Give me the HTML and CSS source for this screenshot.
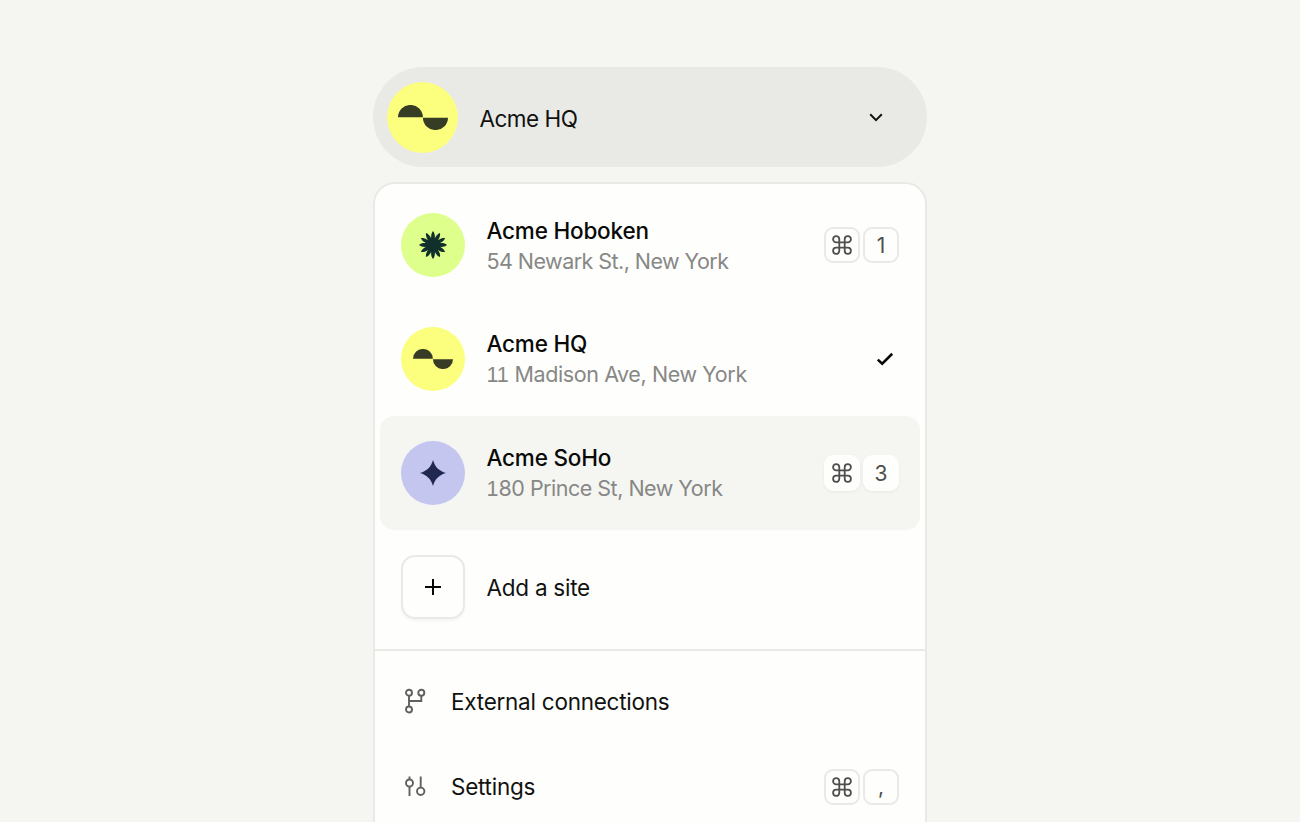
FILE: index.html
```html
<!DOCTYPE html>
<html lang="en">
<head>
<meta charset="utf-8">
<title>Site switcher</title>
<link rel="stylesheet" href="styles.css">
</head>
<body>
<svg class="defs" aria-hidden="true">
  <symbol id="wave" viewBox="0 0 50 25"><path d="M0 12.300a12.400 12.300 0 0 1 24.900 0zM24.900 12.700H50a12.500 12.300 0 0 1-25.100 0z"/></symbol>
  <symbol id="command" viewBox="0 0 20 20"><path d="M7.300 7.300V4.200a3.100 3.100 0 1 0-3.100 3.100h11.600a3.100 3.100 0 1 0-3.100-3.100v11.600a3.100 3.100 0 1 0 3.100-3.100H4.200a3.100 3.100 0 1 0 3.100 3.100z" fill="none" stroke="currentColor" stroke-width="1.800"/></symbol>
</svg>
<main class="switcher">
  <button class="trigger">
    <span class="avatar avatar-large yellow"><svg class="wave-large"><use href="#wave"/></svg></span>
    <span class="trigger-name">Acme HQ</span>
    <svg class="chevron" viewBox="0 0 14 9"><path d="M1.200 1.300 7 7.100l5.800-5.800"/></svg>
  </button>
  <div class="menu">
    <div class="sites">
      <div class="site">
        <span class="avatar green"><svg class="flower" viewBox="-14 -14 28 28"><g id="petals"><path id="petal" d="M0 0C-2.600-7-2.400-11 0-14 2.400-11 2.600-7 0 0z"/><use href="#petal" transform="rotate(30)"/><use href="#petal" transform="rotate(60)"/></g><use href="#petals" transform="rotate(90)"/><use href="#petals" transform="rotate(180)"/><use href="#petals" transform="rotate(270)"/><circle r="7.500"/></svg></span>
        <div class="details"><div class="name">Acme Hoboken</div><div class="address newark">54 Newark St., New York</div></div>
        <div class="keys"><kbd><svg class="cmd"><use href="#command"/></svg></kbd><kbd>1</kbd></div>
      </div>
      <div class="site">
        <span class="avatar yellow"><svg class="wave-small"><use href="#wave"/></svg></span>
        <div class="details"><div class="name">Acme HQ</div><div class="address madison"><span class="footed">11</span> Madison Ave, New York</div></div>
        <svg class="check" viewBox="0 0 18 14"><path d="M1.800 7.600 6.200 11.600 16.200 1.800"/></svg>
      </div>
      <div class="site active">
        <span class="avatar blue"><svg class="spark" viewBox="-13 -13 26 26"><path d="M0-13C2-6 6-2 13 0 6 2 2 6 0 13-2 6-6 2-13 0-6-2-2-6 0-13z"/></svg></span>
        <div class="details"><div class="name">Acme SoHo</div><div class="address prince"><span class="footed">1</span>80 Prince St, New York</div></div>
        <div class="keys"><kbd><svg class="cmd"><use href="#command"/></svg></kbd><kbd>3</kbd></div>
      </div>
      <div class="site">
        <span class="add"><svg class="plus" viewBox="0 0 16 16"><path d="M8 0v16M0 8h16"/></svg></span>
        <div class="details label">Add a site</div>
      </div>
    </div>
    <div class="actions">
      <div class="action">
        <svg class="icon" viewBox="0 0 22 26"><circle cx="5" cy="3.700" r="3"/><circle cx="17.300" cy="3.700" r="3"/><circle cx="5" cy="20.500" r="3"/><path d="M5 6.700v10.800M17.300 6.700V12H5"/></svg>
        <span class="label">External connections</span>
      </div>
      <div class="action">
        <svg class="icon" viewBox="0 0 22 26"><circle cx="5.500" cy="9" r="3.500"/><circle cx="16.700" cy="17.300" r="3.700"/><path d="M5.500 2.500v3M5.500 12.500v9.500M16.700 2.500v11.100"/></svg>
        <span class="label">Settings</span>
        <div class="keys"><kbd><svg class="cmd"><use href="#command"/></svg></kbd><kbd>,</kbd></div>
      </div>
    </div>
  </div>
</main>
</body>
</html>
```
FILE: styles.css
```css
* { box-sizing: border-box; }
body {
  margin: 0;
  height: 822px;
  overflow: hidden;
  background: #f5f6f2;
  color: #111210;
  font-family: Inter, "Liberation Sans", sans-serif;
  font-size: 22.500px;
}
.defs { display: none; }
.switcher { width: 554px; margin: 0 auto; padding-top: 67px; }
.trigger {
  display: flex;
  align-items: center;
  width: 100%;
  height: 100px;
  padding: 0 44px 0 14px;
  border: 0;
  border-radius: 50px;
  background: #e9eae6;
  color: inherit;
  font: inherit;
  text-align: left;
}
.trigger-name { flex: 1; margin-left: 21.400px; padding-top: 2px; letter-spacing: -0.5px; }
.chevron { width: 14px; height: 9px; fill: none; stroke: #111210; stroke-width: 2; }
.avatar {
  display: flex;
  flex: none;
  align-items: center;
  justify-content: center;
  width: 64px;
  height: 64px;
  border-radius: 50%;
}
.avatar-large { width: 71px; height: 71px; }
.yellow { background: #fcff7e; fill: #373d25; }
.green { background: #dfff8c; fill: #12302b; }
.blue { background: #c5c6f0; fill: #202751; }
.wave-large { width: 50px; height: 25px; }
.wave-small { width: 40px; height: 20px; }
.flower { width: 28px; height: 28px; }
.spark { width: 26px; height: 26px; }
.menu {
  height: 680px;
  margin-top: 15px;
  border: 2px solid #e9eae6;
  border-radius: 22px;
  background: #fefefc;
}
.sites { padding: 4px 5px 5px; border-bottom: 2px solid #e9eae6; }
.site {
  display: flex;
  align-items: center;
  height: 114px;
  padding: 0 21px;
  border-radius: 14px;
}
.active { background: #f5f6f2; }
.details { flex: 1; margin-left: 21.500px; }
.name { padding-top: 2px; font-weight: 500; line-height: 30px; letter-spacing: -0.2px; color: #090a08; }
.address { color: #878886; font-size: 21.500px; line-height: 31px; }
.newark { letter-spacing: -0.550px; }
.madison { letter-spacing: -0.400px; }
.prince { letter-spacing: -0.500px; }
.footed { font-family: "Liberation Sans", Arial, sans-serif; letter-spacing: 0; }
.label { letter-spacing: -0.250px; }
.keys { display: flex; gap: 3px; }
kbd {
  display: flex;
  align-items: center;
  justify-content: center;
  width: 36px;
  height: 36px;
  border: 2px solid #e9eae6;
  border-radius: 9px;
  color: #4e4f4d;
  background: #fefefc;
  font: 21px Inter, sans-serif;
}
.active kbd { border-color: #fefefc; box-shadow: 0 1px 3px rgba(0, 0, 0, 0.06); }
.cmd { width: 20px; height: 20px; }
.check { width: 18px; height: 14px; margin-right: 5px; fill: none; stroke: #080907; stroke-width: 2.600; }
.add {
  display: flex;
  align-items: center;
  justify-content: center;
  width: 64px;
  height: 64px;
  border: 2px solid #e9eae6;
  border-radius: 14px;
  box-shadow: 0 2px 3px rgba(0, 0, 0, 0.04);
}
.plus { width: 16px; height: 16px; stroke: #080907; stroke-width: 2; }
.actions { padding: 8px 5px; }
.action { display: flex; align-items: center; height: 85px; padding: 0 21px 0 24px; }
.action .label { flex: 1; margin-left: 25px; }
.icon { width: 22px; height: 26px; overflow: visible; fill: none; stroke: #60615f; stroke-width: 1.900; }
```
